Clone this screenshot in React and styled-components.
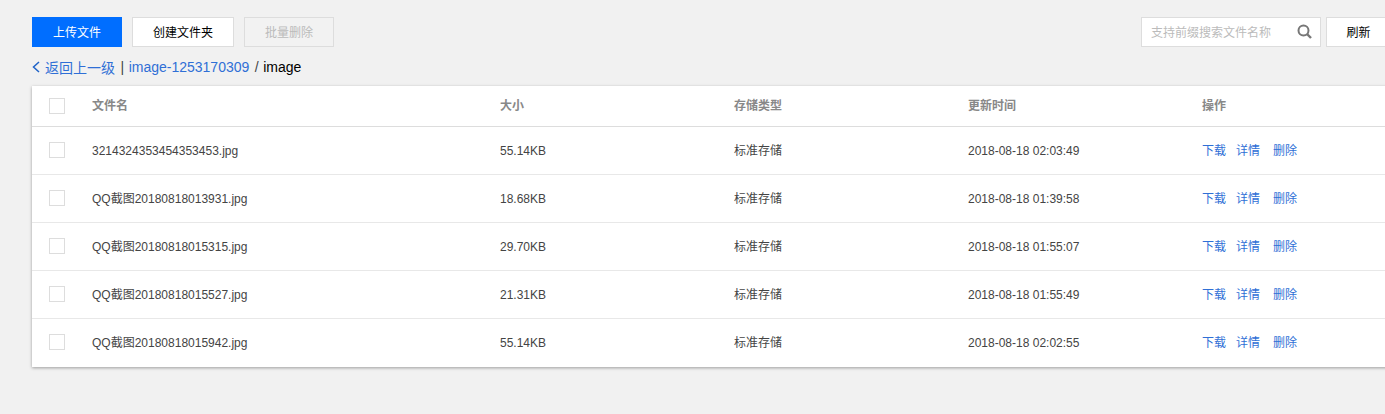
import styled, { createGlobalStyle } from "styled-components";

const FILES = [
  { name: "3214324353454353453.jpg", size: "55.14KB", time: "2018-08-18 02:03:49" },
  { name: "QQ截图20180818013931.jpg", size: "18.68KB", time: "2018-08-18 01:39:58" },
  { name: "QQ截图20180818015315.jpg", size: "29.70KB", time: "2018-08-18 01:55:07" },
  { name: "QQ截图20180818015527.jpg", size: "21.31KB", time: "2018-08-18 01:55:49" },
  { name: "QQ截图20180818015942.jpg", size: "55.14KB", time: "2018-08-18 02:02:55" },
];

const SearchIcon = () => (
  <svg width="15" height="15" viewBox="0 0 15 15" fill="none" stroke="#777">
    <circle cx="6.5" cy="6.5" r="5" strokeWidth="2" />
    <path d="M10 10l4 4" strokeWidth="2.4" />
  </svg>
);

const BackIcon = () => (
  <svg width="8" height="12" viewBox="0 0 8 12" fill="none" stroke="#1f63c8" strokeWidth="1.5">
    <path d="M7 1L1.5 6L7 11" />
  </svg>
);

const App = () => {
  return (
    <Page>
      <GlobalStyle />
      <Toolbar>
        <ButtonGroup>
          <Button $variant="primary">上传文件</Button>
          <Button $wide>创建文件夹</Button>
          <Button $variant="disabled">批量删除</Button>
        </ButtonGroup>
        <RightGroup>
          <SearchBox>
            <SearchText>支持前缀搜索文件名称</SearchText>
            <SearchIcon />
          </SearchBox>
          <RefreshButton>刷新</RefreshButton>
        </RightGroup>
      </Toolbar>
      <Crumbs>
        <BackIcon />
        <BackLink>返回上一级</BackLink>
        <Separator>|</Separator>
        <CrumbLink>image-1253170309</CrumbLink>
        <Separator>/</Separator>
        <Current>image</Current>
      </Crumbs>
      <Table>
        <HeadRow>
          <CheckCell><Check /></CheckCell>
          <span>文件名</span>
          <span>大小</span>
          <span>存储类型</span>
          <span>更新时间</span>
          <span>操作</span>
        </HeadRow>
        {FILES.map((file) => (
          <Row key={file.name}>
            <RowCheckCell><Check /></RowCheckCell>
            <span>{file.name}</span>
            <span>{file.size}</span>
            <span>标准存储</span>
            <span>{file.time}</span>
            <Actions>
              <Action>下载</Action>
              <Action>详情</Action>
              <Action>删除</Action>
            </Actions>
          </Row>
        ))}
      </Table>
    </Page>
  );
};
export default App;

const GlobalStyle = createGlobalStyle`
  html {
    background: #f1f1f1;
    overflow: hidden;
  }
  body {
    margin: 0;
    font-family: "Liberation Sans", "Noto Sans CJK SC", sans-serif;
    font-size: 12px;
    color: #444;
  }
`;

const Page = styled.div`
  width: 1440px;
  padding: 17px 0 40px 32px;
  box-sizing: border-box;
`;

const Toolbar = styled.div`
  display: flex;
  justify-content: space-between;
  width: 1359px;
  height: 30px;
`;

const ButtonGroup = styled.div`
  display: flex;
  gap: 10px;
`;

const RightGroup = styled.div`
  display: flex;
  gap: 5px;
`;

const Button = styled.div`
  width: ${(props) => (props.$wide ? "102px" : "90px")};
  height: 30px;
  box-sizing: border-box;
  padding-bottom: 1px;
  display: flex;
  justify-content: center;
  align-items: center;
  background: ${(props) =>
    props.$variant === "primary" ? "#006eff" : props.$variant === "disabled" ? "#f2f2f2" : "#fff"};
  color: ${(props) =>
    props.$variant === "primary" ? "#fff" : props.$variant === "disabled" ? "#bbb" : "#000"};
  border: 1px solid ${(props) => (props.$variant === "primary" ? "#006eff" : "#ddd")};
`;

const SearchBox = styled.div`
  width: 180px;
  height: 30px;
  box-sizing: border-box;
  padding: 0 8px 1px 9px;
  display: flex;
  justify-content: space-between;
  align-items: center;
  background: #fff;
  border: 1px solid #ddd;
`;

const SearchText = styled.span`
  color: #bbb;
`;

const RefreshButton = styled(Button)`
  width: 65px;
`;

const Crumbs = styled.div`
  display: flex;
  align-items: center;
  height: 20px;
  margin-top: 10px;
  font-size: 14px;
`;

const CrumbLink = styled.span`
  color: #2f6fd6;
`;

const BackLink = styled(CrumbLink)`
  margin-left: 5px;
`;

const Separator = styled.span`
  color: #444;
  margin: 0 4.5px 0 5.5px;
`;

const Current = styled.span`
  color: #000;
`;

const Table = styled.div`
  width: 1400px;
  margin-top: 9px;
  background: #fff;
  box-shadow: 0 1px 3px rgba(0, 0, 0, 0.35);
`;

const HeadRow = styled.div`
  display: grid;
  grid-template-columns: 60px 408px 234px 234px 234px 1fr;
  align-items: center;
  height: 41px;
  box-sizing: border-box;
  padding-bottom: 1px;
  line-height: 16px;
  border-bottom: 1px solid #ddd;
  color: #888;
  font-weight: bold;
`;

const Row = styled(HeadRow)`
  height: 48px;
  padding-bottom: 0;
  border-bottom: 1px solid #e8e8e8;
  color: #444;
  font-weight: normal;

  &:last-child {
    border-bottom-color: transparent;
  }
`;

const CheckCell = styled.div`
  display: flex;
  padding-left: 17px;
`;

const RowCheckCell = styled(CheckCell)`
  padding-bottom: 1px;
`;

const Check = styled.div`
  width: 16px;
  height: 16px;
  box-sizing: border-box;
  background: #fff;
  border: 1px solid #ddd;
`;

const Actions = styled.div`
  display: flex;
  gap: 10px;
`;

const Action = styled.span`
  color: #2f6fd6;

  &:last-child {
    margin-left: 3px;
  }
`;
